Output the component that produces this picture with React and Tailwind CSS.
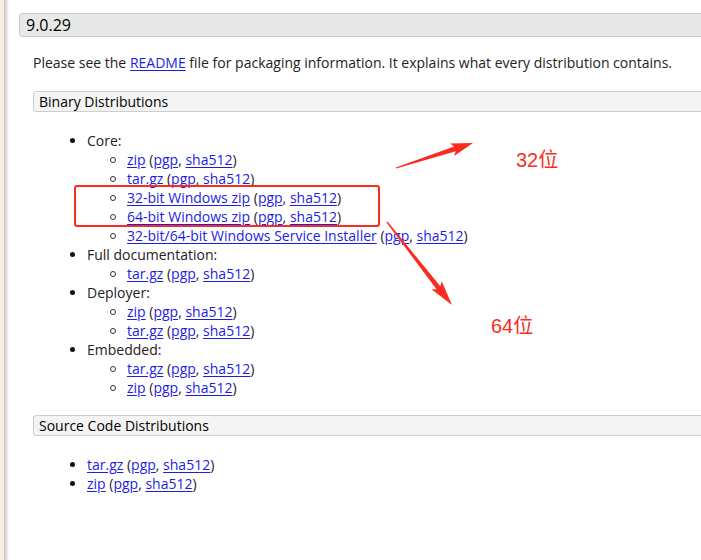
import React from 'react';

const FONT = { fontFamily: '"Open Sans", "Noto Sans", Arial, sans-serif' };
const CJK = { fontFamily: '"Liberation Sans", "Noto Sans CJK SC", sans-serif' };

function Link({ children }) {
  return <a href="#" className="text-[#1d1de6] underline underline-offset-[2px]">{children}</a>;
}

function Sig() {
  return (
    <>
      {' ('}<Link>pgp</Link>, <Link>sha512</Link>)
    </>
  );
}

function Disc() {
  return (
    <span className="w-[17px] shrink-0 flex items-center">
      <span className="block w-[5px] h-[5px] rounded-full bg-[#111]" />
    </span>
  );
}

function Circle() {
  return (
    <span className="w-[17px] shrink-0 flex items-center">
      <span className="block w-[6px] h-[6px] rounded-full border border-[#333]" />
    </span>
  );
}

function Item({ children }) {
  return (
    <li className="flex h-[19px] items-center pl-[37px]">
      <Disc />
      <span>{children}</span>
    </li>
  );
}

function Sub({ name }) {
  return (
    <li className="flex h-[19px] items-center pl-[77px]">
      <Circle />
      <span><Link>{name}</Link><Sig /></span>
    </li>
  );
}

function arrowPoints(x1, y1, x2, y2, head, hw, sw) {
  const dx = x2 - x1, dy = y2 - y1;
  const len = Math.hypot(dx, dy);
  const ux = dx / len, uy = dy / len;
  const nx = -uy, ny = ux;
  const bx = x2 - ux * head, by = y2 - uy * head;
  const p = (x, y) => `${x.toFixed(1)},${y.toFixed(1)}`;
  return [
    p(x1 + nx * 0.6, y1 + ny * 0.6),
    p(bx + nx * sw, by + ny * sw),
    p(bx - ux * 3 + nx * hw, by - uy * 3 + ny * hw),
    p(x2, y2),
    p(bx - ux * 3 - nx * hw, by - uy * 3 - ny * hw),
    p(bx - nx * sw, by - ny * sw),
    p(x1 - nx * 0.6, y1 - ny * 0.6),
  ].join(' ');
}

function Section({ title, children }) {
  return (
    <div>
      <div className="h-[21px] -mr-4 flex items-center pl-[5px] bg-[#f4f4f4] border border-[#cdcdcd] rounded-l-[3px] text-[14px] text-black">
        {title}
      </div>
      {children}
    </div>
  );
}

export default function App() {
  return (
    <div className="relative w-[701px] h-[560px] overflow-hidden flex bg-white text-[14px] leading-[19px] text-[#222]" style={FONT}>
      <div className="w-[4px] shrink-0 bg-[#f6eee2]" />
      <div className="w-[5px] shrink-0 bg-gradient-to-r from-[#c4c4c4] to-white" />

      <div className="flex-1 pl-[10px] pt-[13px]">
        <div className="h-[24px] -mr-4 flex items-center pl-[6px] bg-[#e8e8e8] border border-[#cbcbcb] rounded-l-[3px] text-[16px] text-black">
          9.0.29
        </div>

        <div className="pl-[14px]">
          <p className="mt-[16px]">
            Please see the <Link>README</Link> file for packaging information. It explains what every distribution contains.
          </p>

          <div className="mt-[19px]">
            <Section title="Binary Distributions">
              <ul className="mt-[19px]">
                <Item>Core:</Item>
                <Sub name="zip" />
                <Sub name="tar.gz" />
                <Sub name="32-bit Windows zip" />
                <Sub name="64-bit Windows zip" />
                <Sub name="32-bit/64-bit Windows Service Installer" />
                <Item>Full documentation:</Item>
                <Sub name="tar.gz" />
                <Item>Deployer:</Item>
                <Sub name="zip" />
                <Sub name="tar.gz" />
                <Item>Embedded:</Item>
                <Sub name="tar.gz" />
                <Sub name="zip" />
              </ul>
            </Section>
          </div>

          <div className="mt-[18px]">
            <Section title="Source Code Distributions">
              <ul className="mt-[19px]">
                <Item><Link>tar.gz</Link><Sig /></Item>
                <Item><Link>zip</Link><Sig /></Item>
              </ul>
            </Section>
          </div>
        </div>
      </div>

      {/* annotations */}
      <div className="absolute left-[74px] top-[185px] w-[306px] h-[42px] border-[2.5px] border-[#fb2b1f] rounded-[3px] pointer-events-none" />
      <svg className="absolute inset-0 pointer-events-none" width="701" height="560">
        <polygon points={arrowPoints(396, 168, 473, 143, 19, 6.5, 2.4)} fill="#fb2b1f" />
        <polygon points={arrowPoints(387, 222, 452, 305, 22, 6.5, 2.4)} fill="#fb2b1f" />
      </svg>
      <span className="absolute left-[516px] top-[147px] text-[20px] leading-[26px] text-[#fb2b1f]" style={CJK}>32位</span>
      <span className="absolute left-[491px] top-[313px] text-[20px] leading-[26px] text-[#fb2b1f]" style={CJK}>64位</span>
    </div>
  );
}
